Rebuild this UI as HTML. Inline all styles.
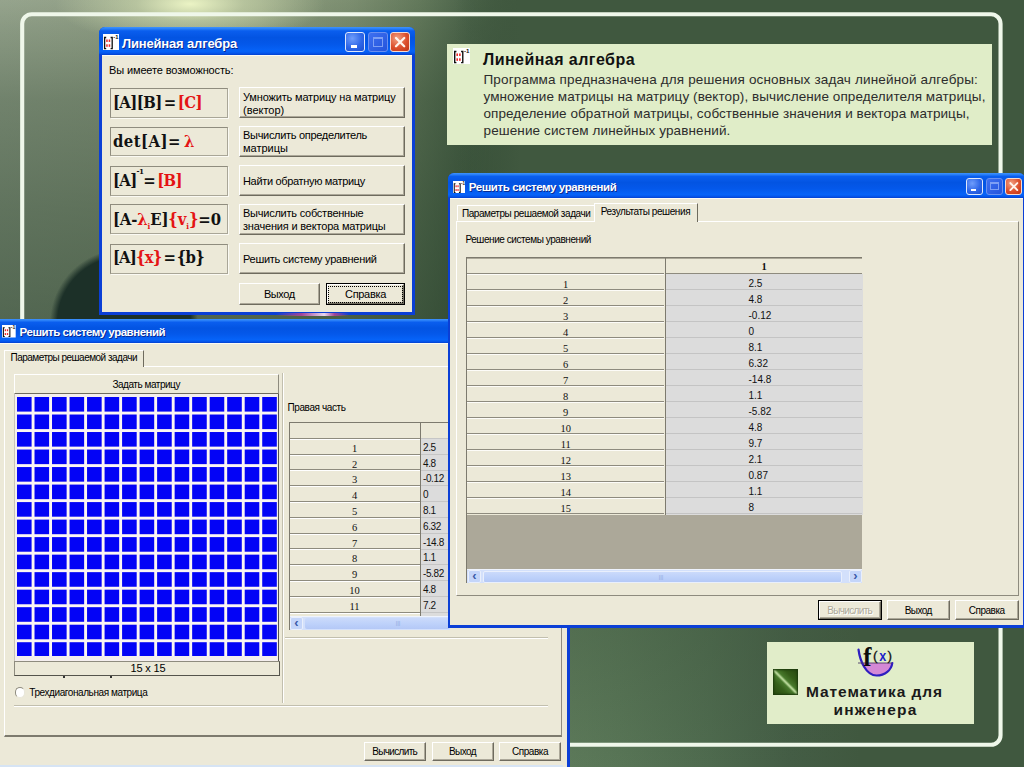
<!DOCTYPE html>
<html lang="ru">
<head>
<meta charset="utf-8">
<title>Линейная алгебра</title>
<style>
html,body{margin:0;padding:0;}
body{width:1024px;height:767px;overflow:hidden;position:relative;background:#41593f;font-family:"Liberation Sans","DejaVu Sans",sans-serif;font-size:11px;color:#000;}
#bg{position:absolute;left:0;top:0;width:1024px;height:767px;
 background:
  radial-gradient(ellipse 135px 42px at 190px 4px, rgba(240,248,200,.95) 0%, rgba(215,226,180,.55) 40%, rgba(170,185,145,0) 100%),
  radial-gradient(circle 74px at 124px 323px, #1c3028 0%, #1c3028 90%, rgba(28,48,40,0) 100%),
  linear-gradient(180deg,rgba(30,55,35,.02) 0px,rgba(30,55,35,.12) 30px,rgba(30,55,35,.32) 100px,rgba(30,55,35,.46) 210px,rgba(30,55,35,.57) 320px,rgba(30,55,35,.57) 767px),
  linear-gradient(90deg,#98a68f 0px,#95a38a 100px,#91a082 260px,#7e9072 350px,#647a5c 420px,#4c644a 470px,#40583f 520px,#40583f 1024px);}
#bgr{position:absolute;left:455px;top:0;width:569px;height:767px;background:linear-gradient(90deg,rgba(64,88,63,0) 0px,#40583f 65px,#40583f);}
#bgb{position:absolute;left:560px;top:620px;width:464px;height:147px;background:linear-gradient(180deg,rgba(64,88,63,.35) 0%,rgba(64,88,63,0) 100%),linear-gradient(90deg,#5d7a5a 0px,#587556 60px,#4e6a4e 150px,#445d45 230px,#40583f 300px);}
#frame{position:absolute;left:0;top:0;}
</style>
</head>
<body>
<div id="bg"></div>
<div id="bgr"></div>
<div id="bgb"></div>
<svg id="frame" width="1024" height="767" viewBox="0 0 1024 767"><rect x="22.200" y="14.200" width="978.350" height="730.600" rx="9.500" ry="9.500" fill="none" stroke="#eff7ea" stroke-width="4.100"/></svg>
<div style="position:absolute;left:447px;top:43.5px;width:544.5px;height:101px;background:#e0edc8;"></div>
<svg width="17" height="16" viewBox="0 0 16 15.5" preserveAspectRatio="none" style="position:absolute;left:453px;top:48px"><rect width="16" height="15.500" fill="#fff"/><path d="M3.200 3.400H1.600V14.200H3.200M7.600 3.400H9.200V14.200H7.600" stroke="#111" stroke-width="1.300" fill="none"/><rect x="3.200" y="5.300" width="1.500" height="2.400" fill="#f02828"/><rect x="5.700" y="5.300" width="1.500" height="2.400" fill="#f02828"/><rect x="3.200" y="10" width="1.500" height="2.400" fill="#f02828"/><rect x="5.700" y="10" width="1.500" height="2.400" fill="#f02828"/><text x="10.300" y="5" font-family="Liberation Sans,sans-serif" font-weight="bold" font-size="5.800" fill="#111">-1</text></svg>
<div style="position:absolute;left:483.00px;top:48.50px;line-height:21px;font-family:'Liberation Sans','DejaVu Sans',sans-serif;font-size:16px;font-weight:bold;color:#111;white-space:nowrap;letter-spacing:0.451px;">Линейная алгебра</div>
<div style="position:absolute;left:483.50px;top:71.30px;line-height:18px;font-family:'Liberation Sans','DejaVu Sans',sans-serif;font-size:13.5px;font-weight:normal;color:#2c2c2c;white-space:nowrap;letter-spacing:0.163px;">Программа предназначена для решения основных задач линейной алгебры:</div>
<div style="position:absolute;left:483.50px;top:88.20px;line-height:18px;font-family:'Liberation Sans','DejaVu Sans',sans-serif;font-size:13.5px;font-weight:normal;color:#2c2c2c;white-space:nowrap;letter-spacing:0.086px;">умножение матрицы на матрицу (вектор), вычисление определителя матрицы,</div>
<div style="position:absolute;left:483.50px;top:105.10px;line-height:18px;font-family:'Liberation Sans','DejaVu Sans',sans-serif;font-size:13.5px;font-weight:normal;color:#2c2c2c;white-space:nowrap;letter-spacing:0.072px;">определение обратной матрицы, собственные значения и вектора матрицы,</div>
<div style="position:absolute;left:483.50px;top:122.00px;line-height:18px;font-family:'Liberation Sans','DejaVu Sans',sans-serif;font-size:13.5px;font-weight:normal;color:#2c2c2c;white-space:nowrap;letter-spacing:0.122px;">решение систем линейных уравнений.</div>
<div style="position:absolute;left:767px;top:642px;width:206.5px;height:82px;background:#e1edc9;"></div>
<div style="position:absolute;left:773px;top:669px;width:25px;height:25.5px;background:linear-gradient(45deg,#28480f 0%,#36601a 30%,#497a2c 44%,#c4e2a4 50%,#497a2c 56%,#345c18 72%,#26460e 100%);box-shadow:inset 0 0 2px 1px #1c3a0c;"></div>
<div style="position:absolute;left:806.00px;top:682.00px;line-height:20px;font-family:'Liberation Sans','DejaVu Sans',sans-serif;font-size:15.5px;font-weight:bold;color:#1a1a1a;white-space:nowrap;letter-spacing:0.917px;">Математика для</div>
<div style="position:absolute;left:833.50px;top:700.30px;line-height:20px;font-family:'Liberation Sans','DejaVu Sans',sans-serif;font-size:15.5px;font-weight:bold;color:#1a1a1a;white-space:nowrap;letter-spacing:1.203px;">инженера</div>
<svg width="44" height="36" viewBox="853 643 44 36" style="position:absolute;left:853px;top:643px">
<path d="M861.500 663 H892.300 C891.500 670 885 675.500 876.500 675.500 C869 675.500 864 670 861.500 663Z" fill="#d488d6"/>
<path d="M858.500 649.500 C860 661 866 675.500 876.500 675.500 C885 675.500 891.500 670 892.300 663" fill="none" stroke="#2e1ec0" stroke-width="2.200" stroke-linecap="round"/>
<path d="M858 663 H892" stroke="#4a3a6a" stroke-width="0.900"/>
<text x="863.300" y="665.600" font-family="Liberation Serif,serif" font-weight="bold" font-size="27" textLength="8.200" lengthAdjust="spacingAndGlyphs" fill="#0c0c0c">f</text>
<text x="873" y="660.400" font-family="Liberation Sans,sans-serif" font-size="13.500" fill="#111" stroke="#111" stroke-width="0.300">(</text>
<text x="887.600" y="660.400" font-family="Liberation Sans,sans-serif" font-size="13.500" fill="#111" stroke="#111" stroke-width="0.300">)</text>
<text x="879.200" y="660.900" font-family="Liberation Sans,sans-serif" font-weight="bold" font-size="15.500" textLength="7" lengthAdjust="spacingAndGlyphs" fill="#1c1cc8">x</text>
</svg>
<div style="position:absolute;left:98.5px;top:27px;width:316.5px;height:288px;background:#0b3fd6;border-radius:6px 6px 0 0;"></div>
<div style="position:absolute;left:98.5px;top:27px;width:316.5px;height:28px;background:linear-gradient(180deg,#3f93fc 0%,#2a80f8 6%,#0a5eee 14%,#0354e2 38%,#0458ea 62%,#0663f8 86%,#0558ee 93%,#0340cf 100%);border-radius:6px 6px 0 0;"></div>
<div style="position:absolute;left:101.5px;top:55px;width:310.5px;height:257px;background:#ece9d8;box-shadow:inset 0 1px 0 #fbfaf4;"></div>
<div style="position:absolute;left:276px;top:312.5px;width:73px;height:3px;background:linear-gradient(90deg,rgba(176,70,150,0) 0%,rgba(176,70,150,.9) 35%,#e6d6ee 66%,rgba(176,70,150,.9) 80%,rgba(176,70,150,0) 100%);"></div>
<svg width="16" height="16" viewBox="0 0 16 15.5" preserveAspectRatio="none" style="position:absolute;left:103px;top:34px"><rect width="16" height="15.500" fill="#fff"/><path d="M3.200 3.400H1.600V14.200H3.200M7.600 3.400H9.200V14.200H7.600" stroke="#111" stroke-width="1.300" fill="none"/><rect x="3.200" y="5.300" width="1.500" height="2.400" fill="#f02828"/><rect x="5.700" y="5.300" width="1.500" height="2.400" fill="#f02828"/><rect x="3.200" y="10" width="1.500" height="2.400" fill="#f02828"/><rect x="5.700" y="10" width="1.500" height="2.400" fill="#f02828"/><text x="10.300" y="5" font-family="Liberation Sans,sans-serif" font-weight="bold" font-size="5.800" fill="#111">-1</text></svg>
<div style="position:absolute;left:122.00px;top:35.00px;line-height:17px;font-family:'Liberation Sans','DejaVu Sans',sans-serif;font-size:13px;font-weight:bold;color:#fff;white-space:nowrap;letter-spacing:-0.165px;text-shadow:1px 1px 0 #0a2a90;">Линейная алгебра</div>
<div style="position:absolute;left:345px;top:32px;width:20px;height:20px;box-sizing:border-box;border:1px solid #dfe8fb;border-radius:3px;background:radial-gradient(circle at 35% 30%,#6f9dfb 0%,#2f67e8 55%,#1c4fd0 100%);"><div style="position:absolute;left:4.8px;top:12.0px;width:6.4px;height:3.0px;background:#fff"></div></div>
<div style="position:absolute;left:368px;top:32px;width:20px;height:20px;box-sizing:border-box;border:1px solid #6a90f0;border-radius:3px;background:linear-gradient(135deg,#3e70f0,#2454dc);"><div style="position:absolute;left:4.4px;top:4.0px;width:10.0px;height:9.6px;border:1px solid #7d9ff4;border-top-width:2.5px;box-sizing:border-box"></div></div>
<div style="position:absolute;left:390px;top:32px;width:20px;height:20px;box-sizing:border-box;border:1px solid #f6dcd2;border-radius:3px;background:radial-gradient(circle at 35% 30%,#f2a284 0%,#dc4f2c 55%,#bf3416 100%);"><svg width="20" height="20" viewBox="0 0 20 20" style="position:absolute;left:-1px;top:-1px"><path d="M6 6L14.200 14.200M14.200 6L6 14.200" stroke="#fff4ec" stroke-width="2.300" stroke-linecap="round"/></svg></div>
<div style="position:absolute;left:109.00px;top:63.40px;line-height:14px;font-family:'Liberation Sans','DejaVu Sans',sans-serif;font-size:11px;font-weight:normal;color:#000;white-space:nowrap;letter-spacing:-0.125px;">Вы имеете возможность:</div>
<div style="position:absolute;left:110px;top:88px;width:117.5px;height:29.5px;box-sizing:border-box;border:1px solid;border-color:#8f8c7e #a9a697 #a9a697 #8f8c7e;box-shadow:1px 1px 0 #fbfaf3;"></div>
<div style="position:absolute;left:110px;top:126.5px;width:117.5px;height:29.5px;box-sizing:border-box;border:1px solid;border-color:#8f8c7e #a9a697 #a9a697 #8f8c7e;box-shadow:1px 1px 0 #fbfaf3;"></div>
<div style="position:absolute;left:110px;top:166px;width:117.5px;height:29.5px;box-sizing:border-box;border:1px solid;border-color:#8f8c7e #a9a697 #a9a697 #8f8c7e;box-shadow:1px 1px 0 #fbfaf3;"></div>
<div style="position:absolute;left:110px;top:204px;width:117.5px;height:29.5px;box-sizing:border-box;border:1px solid;border-color:#8f8c7e #a9a697 #a9a697 #8f8c7e;box-shadow:1px 1px 0 #fbfaf3;"></div>
<div style="position:absolute;left:110px;top:244px;width:117.5px;height:29.5px;box-sizing:border-box;border:1px solid;border-color:#8f8c7e #a9a697 #a9a697 #8f8c7e;box-shadow:1px 1px 0 #fbfaf3;"></div>
<div style="position:absolute;left:239px;top:87px;width:166px;height:31px;box-sizing:border-box;background:#ece9d8;border:1px solid;border-color:#fff #6e6b5e #6e6b5e #fff;box-shadow:inset -1px -1px 0 #aca899;"></div>
<div style="position:absolute;left:239px;top:125.5px;width:166px;height:31px;box-sizing:border-box;background:#ece9d8;border:1px solid;border-color:#fff #6e6b5e #6e6b5e #fff;box-shadow:inset -1px -1px 0 #aca899;"></div>
<div style="position:absolute;left:239px;top:165.3px;width:166px;height:31px;box-sizing:border-box;background:#ece9d8;border:1px solid;border-color:#fff #6e6b5e #6e6b5e #fff;box-shadow:inset -1px -1px 0 #aca899;"></div>
<div style="position:absolute;left:239px;top:203.5px;width:166px;height:31px;box-sizing:border-box;background:#ece9d8;border:1px solid;border-color:#fff #6e6b5e #6e6b5e #fff;box-shadow:inset -1px -1px 0 #aca899;"></div>
<div style="position:absolute;left:239px;top:242.7px;width:166px;height:31px;box-sizing:border-box;background:#ece9d8;border:1px solid;border-color:#fff #6e6b5e #6e6b5e #fff;box-shadow:inset -1px -1px 0 #aca899;"></div>
<div style="position:absolute;left:239px;top:282.5px;width:80.5px;height:22.5px;box-sizing:border-box;background:#ece9d8;border:1px solid;border-color:#fff #6e6b5e #6e6b5e #fff;box-shadow:inset -1px -1px 0 #aca899;"></div>
<div style="position:absolute;left:325.5px;top:282.5px;width:79.5px;height:22.5px;background:#000;"></div>
<div style="position:absolute;left:326.5px;top:283.5px;width:77.5px;height:20.5px;box-sizing:border-box;background:#ece9d8;border:1px solid;border-color:#fff #6e6b5e #6e6b5e #fff;box-shadow:inset -1px -1px 0 #aca899;"></div>
<div style="position:absolute;left:328px;top:285.5px;width:74.5px;height:17px;box-sizing:border-box;border:1px dotted #000;"></div>
<div style="position:absolute;left:243.00px;top:89.80px;line-height:14px;font-family:'Liberation Sans','DejaVu Sans',sans-serif;font-size:11px;font-weight:normal;color:#000;white-space:nowrap;letter-spacing:-0.161px;">Умножить матрицу на матрицу</div>
<div style="position:absolute;left:243.00px;top:102.60px;line-height:14px;font-family:'Liberation Sans','DejaVu Sans',sans-serif;font-size:11px;font-weight:normal;color:#000;white-space:nowrap;">(вектор)</div>
<div style="position:absolute;left:243.00px;top:128.00px;line-height:14px;font-family:'Liberation Sans','DejaVu Sans',sans-serif;font-size:11px;font-weight:normal;color:#000;white-space:nowrap;letter-spacing:-0.301px;">Вычислить определитель</div>
<div style="position:absolute;left:243.00px;top:141.30px;line-height:14px;font-family:'Liberation Sans','DejaVu Sans',sans-serif;font-size:11px;font-weight:normal;color:#000;white-space:nowrap;">матрицы</div>
<div style="position:absolute;left:243.00px;top:173.50px;line-height:14px;font-family:'Liberation Sans','DejaVu Sans',sans-serif;font-size:11px;font-weight:normal;color:#000;white-space:nowrap;letter-spacing:-0.333px;">Найти обратную матрицу</div>
<div style="position:absolute;left:243.00px;top:206.40px;line-height:14px;font-family:'Liberation Sans','DejaVu Sans',sans-serif;font-size:11px;font-weight:normal;color:#000;white-space:nowrap;letter-spacing:-0.237px;">Вычислить собственные</div>
<div style="position:absolute;left:243.00px;top:219.30px;line-height:14px;font-family:'Liberation Sans','DejaVu Sans',sans-serif;font-size:11px;font-weight:normal;color:#000;white-space:nowrap;letter-spacing:-0.182px;">значения и вектора матрицы</div>
<div style="position:absolute;left:243.00px;top:251.50px;line-height:14px;font-family:'Liberation Sans','DejaVu Sans',sans-serif;font-size:11px;font-weight:normal;color:#000;white-space:nowrap;letter-spacing:-0.271px;">Решить систему уравнений</div>
<div style="position:absolute;left:264.00px;top:286.90px;line-height:14px;font-family:'Liberation Sans','DejaVu Sans',sans-serif;font-size:11px;font-weight:normal;color:#000;white-space:nowrap;letter-spacing:-0.464px;">Выход</div>
<div style="position:absolute;left:345.00px;top:286.90px;line-height:14px;font-family:'Liberation Sans','DejaVu Sans',sans-serif;font-size:11px;font-weight:normal;color:#000;white-space:nowrap;letter-spacing:-0.308px;">Справка</div>
<div style="position:absolute;left:112.90px;top:92.00px;line-height:21px;font-family:'DejaVu Serif Condensed','DejaVu Serif','Liberation Serif',serif;font-size:16.5px;font-weight:bold;color:#111;white-space:nowrap;letter-spacing:-0.568px;word-spacing:-2.500px;">[A][B] = <span style="color:#e41414">[C]</span></div>
<div style="position:absolute;left:112.90px;top:130.50px;line-height:21px;font-family:'DejaVu Serif Condensed','DejaVu Serif','Liberation Serif',serif;font-size:16.5px;font-weight:bold;color:#111;white-space:nowrap;letter-spacing:0.469px;word-spacing:-2.500px;">det[A]= <span style="color:#e41414">λ</span></div>
<div style="position:absolute;left:112.90px;top:170.00px;line-height:21px;font-family:'DejaVu Serif Condensed','DejaVu Serif','Liberation Serif',serif;font-size:16.5px;font-weight:bold;color:#111;white-space:nowrap;letter-spacing:-0.630px;word-spacing:-2.500px;">[A]<sup style="font-size:8px;position:relative;top:-3px;vertical-align:top;line-height:8px">-1</sup>= <span style="color:#e41414">[B]</span></div>
<div style="position:absolute;left:112.90px;top:208.50px;line-height:21px;font-family:'DejaVu Serif Condensed','DejaVu Serif','Liberation Serif',serif;font-size:16.5px;font-weight:bold;color:#111;white-space:nowrap;letter-spacing:-0.114px;word-spacing:-2.500px;">[A-<span style="color:#e41414">λ<sub style="font-size:8px;line-height:6px">i</sub></span>E]<span style="color:#e41414">{v<sub style="font-size:8px;line-height:6px">i</sub>}</span>=0</div>
<div style="position:absolute;left:112.90px;top:247.20px;line-height:21px;font-family:'DejaVu Serif Condensed','DejaVu Serif','Liberation Serif',serif;font-size:16.5px;font-weight:bold;color:#111;white-space:nowrap;letter-spacing:-0.815px;word-spacing:-2.500px;">[A]<span style="color:#e41414">{x}</span> = {b}</div>
<div style="position:absolute;left:-3px;top:319px;width:572.5px;height:461px;background:#0b3fd6;border-radius:0px 6px 0 0;"></div>
<div style="position:absolute;left:-3px;top:319px;width:572.5px;height:24px;background:linear-gradient(180deg,#3f93fc 0%,#2a80f8 6%,#0a5eee 14%,#0354e2 38%,#0458ea 62%,#0663f8 86%,#0558ee 93%,#0340cf 100%);border-radius:0px 6px 0 0;"></div>
<div style="position:absolute;left:-3px;top:343px;width:569.5px;height:434px;background:#ece9d8;box-shadow:inset 0 1px 0 #fbfaf4;"></div>
<svg width="13.7" height="12.5" viewBox="0 0 16 15.5" preserveAspectRatio="none" style="position:absolute;left:2.2px;top:325px"><rect width="16" height="15.500" fill="#fff"/><path d="M3.200 3.400H1.600V14.200H3.200M7.600 3.400H9.200V14.200H7.600" stroke="#111" stroke-width="1.300" fill="none"/><rect x="3.200" y="5.300" width="1.500" height="2.400" fill="#f02828"/><rect x="5.700" y="5.300" width="1.500" height="2.400" fill="#f02828"/><rect x="3.200" y="10" width="1.500" height="2.400" fill="#f02828"/><rect x="5.700" y="10" width="1.500" height="2.400" fill="#f02828"/><text x="10.300" y="5" font-family="Liberation Sans,sans-serif" font-weight="bold" font-size="5.800" fill="#111">-1</text></svg>
<div style="position:absolute;left:19.60px;top:324.80px;line-height:15px;font-family:'Liberation Sans','DejaVu Sans',sans-serif;font-size:11.5px;font-weight:bold;color:#fff;white-space:nowrap;letter-spacing:-0.483px;text-shadow:1px 1px 0 #0a2a90;">Решить систему уравнений</div>
<div style="position:absolute;left:4px;top:365.5px;width:557.5px;height:371.8px;box-sizing:border-box;border:1px solid;border-color:#fff #8e8b7e #7d7a6e #fff;border-bottom-width:2px;border-right-width:1.500px;"></div>
<div style="position:absolute;left:4px;top:349.5px;width:140px;height:17px;box-sizing:border-box;background:#ece9d8;border:1px solid;border-color:#fff #6e6b5e transparent #fff;border-bottom:0;"></div>
<div style="position:absolute;left:10.50px;top:351.10px;line-height:13px;font-family:'Liberation Sans','DejaVu Sans',sans-serif;font-size:10px;font-weight:normal;color:#000;white-space:nowrap;letter-spacing:-0.511px;">Параметры решаемой задачи</div>
<div style="position:absolute;left:14px;top:374px;width:264.5px;height:20px;box-sizing:border-box;border:1px solid;border-color:#fff #8e8b7e #6e6b5e #fff;border-bottom-width:1.500px;"></div>
<div style="position:absolute;left:112.45px;top:377.80px;line-height:13px;font-family:'Liberation Sans','DejaVu Sans',sans-serif;font-size:10px;font-weight:normal;color:#000;white-space:nowrap;letter-spacing:-0.467px;">Задать матрицу</div>
<div style="position:absolute;left:14px;top:394px;width:265px;height:266.5px;background:#f4eeee;box-sizing:border-box;border-right:1.500px solid #55544c;border-left:1px solid #c8c4b8;"></div>
<div style="position:absolute;left:17px;top:396.5px;width:259.8px;height:259.8px;background-color:#0303f6;background-image:linear-gradient(90deg,transparent 14.719999999999999px,#fbf5f3 14.719999999999999px),linear-gradient(180deg,transparent 14.719999999999999px,#fbf5f3 14.719999999999999px);background-size:17.52px 17.52px;"></div>
<div style="position:absolute;left:14px;top:660.5px;width:266px;height:15.5px;box-sizing:border-box;border:1px solid;border-color:#8e8b7e #55544c #55544c #8e8b7e;"></div>
<div style="position:absolute;left:130.50px;top:661.00px;line-height:14px;font-family:'Liberation Sans','DejaVu Sans',sans-serif;font-size:11px;font-weight:normal;color:#000;white-space:nowrap;letter-spacing:-0.156px;">15 x 15</div>
<div style="position:absolute;left:62.5px;top:676px;width:2px;height:2px;background:#333;"></div>
<div style="position:absolute;left:110px;top:676px;width:2px;height:2px;background:#333;"></div>
<div style="position:absolute;left:14.5px;top:687px;width:10.5px;height:10.5px;box-sizing:border-box;border-radius:50%;background:#fff;border:1px solid;border-color:#8e8b7e #e8e6da #e8e6da #8e8b7e;"></div>
<div style="position:absolute;left:29.30px;top:685.80px;line-height:13px;font-family:'Liberation Sans','DejaVu Sans',sans-serif;font-size:10px;font-weight:normal;color:#000;white-space:nowrap;letter-spacing:-0.419px;">Трехдиагональная матрица</div>
<div style="position:absolute;left:282px;top:373px;width:1px;height:330px;background:#c2bfae;"></div>
<div style="position:absolute;left:283px;top:373px;width:1px;height:330px;background:#fff;"></div>
<div style="position:absolute;left:14px;top:704.5px;width:534px;height:1px;background:#c2bfae;"></div>
<div style="position:absolute;left:14px;top:705.5px;width:534px;height:1px;background:#fff;"></div>
<div style="position:absolute;left:285px;top:637px;width:263px;height:1px;background:#c2bfae;"></div>
<div style="position:absolute;left:285px;top:638px;width:263px;height:1px;background:#fff;"></div>
<div style="position:absolute;left:287.50px;top:400.50px;line-height:13px;font-family:'Liberation Sans','DejaVu Sans',sans-serif;font-size:10px;font-weight:normal;color:#000;white-space:nowrap;letter-spacing:-0.402px;">Правая часть</div>
<div style="position:absolute;left:288.5px;top:422px;width:161.5px;height:208px;background:#ece9d8;box-sizing:border-box;border-top:1.500px solid #7d7a6e;border-left:1.500px solid #7d7a6e;"></div>
<div style="position:absolute;left:421px;top:439px;width:29px;height:177px;background:#dcdcdc;"></div>
<div style="position:absolute;left:420px;top:422px;width:1.2px;height:194px;background:#7d7a6e;"></div>
<div style="position:absolute;left:289.5px;top:437.8px;width:130.5px;height:1px;background:#8e8b7e;"></div>
<div style="position:absolute;left:289.5px;top:438.8px;width:130.5px;height:1px;background:#fff;"></div>
<div style="position:absolute;left:421px;top:438px;width:29px;height:1px;background:#c6c6c6;"></div>
<div style="position:absolute;left:289.5px;top:453.6px;width:130.5px;height:1px;background:#8e8b7e;"></div>
<div style="position:absolute;left:289.5px;top:454.6px;width:130.5px;height:1px;background:#fff;"></div>
<div style="position:absolute;left:421px;top:453.8px;width:29px;height:1px;background:#c6c6c6;"></div>
<div style="position:absolute;left:289.5px;top:469.4px;width:130.5px;height:1px;background:#8e8b7e;"></div>
<div style="position:absolute;left:289.5px;top:470.4px;width:130.5px;height:1px;background:#fff;"></div>
<div style="position:absolute;left:421px;top:469.6px;width:29px;height:1px;background:#c6c6c6;"></div>
<div style="position:absolute;left:289.5px;top:485.2px;width:130.5px;height:1px;background:#8e8b7e;"></div>
<div style="position:absolute;left:289.5px;top:486.2px;width:130.5px;height:1px;background:#fff;"></div>
<div style="position:absolute;left:421px;top:485.4px;width:29px;height:1px;background:#c6c6c6;"></div>
<div style="position:absolute;left:289.5px;top:501px;width:130.5px;height:1px;background:#8e8b7e;"></div>
<div style="position:absolute;left:289.5px;top:502px;width:130.5px;height:1px;background:#fff;"></div>
<div style="position:absolute;left:421px;top:501.2px;width:29px;height:1px;background:#c6c6c6;"></div>
<div style="position:absolute;left:289.5px;top:516.8px;width:130.5px;height:1px;background:#8e8b7e;"></div>
<div style="position:absolute;left:289.5px;top:517.8px;width:130.5px;height:1px;background:#fff;"></div>
<div style="position:absolute;left:421px;top:517px;width:29px;height:1px;background:#c6c6c6;"></div>
<div style="position:absolute;left:289.5px;top:532.6px;width:130.5px;height:1px;background:#8e8b7e;"></div>
<div style="position:absolute;left:289.5px;top:533.6px;width:130.5px;height:1px;background:#fff;"></div>
<div style="position:absolute;left:421px;top:532.8px;width:29px;height:1px;background:#c6c6c6;"></div>
<div style="position:absolute;left:289.5px;top:548.4px;width:130.5px;height:1px;background:#8e8b7e;"></div>
<div style="position:absolute;left:289.5px;top:549.4px;width:130.5px;height:1px;background:#fff;"></div>
<div style="position:absolute;left:421px;top:548.6px;width:29px;height:1px;background:#c6c6c6;"></div>
<div style="position:absolute;left:289.5px;top:564.2px;width:130.5px;height:1px;background:#8e8b7e;"></div>
<div style="position:absolute;left:289.5px;top:565.2px;width:130.5px;height:1px;background:#fff;"></div>
<div style="position:absolute;left:421px;top:564.4px;width:29px;height:1px;background:#c6c6c6;"></div>
<div style="position:absolute;left:289.5px;top:580px;width:130.5px;height:1px;background:#8e8b7e;"></div>
<div style="position:absolute;left:289.5px;top:581px;width:130.5px;height:1px;background:#fff;"></div>
<div style="position:absolute;left:421px;top:580.2px;width:29px;height:1px;background:#c6c6c6;"></div>
<div style="position:absolute;left:289.5px;top:595.8px;width:130.5px;height:1px;background:#8e8b7e;"></div>
<div style="position:absolute;left:289.5px;top:596.8px;width:130.5px;height:1px;background:#fff;"></div>
<div style="position:absolute;left:421px;top:596px;width:29px;height:1px;background:#c6c6c6;"></div>
<div style="position:absolute;left:289.5px;top:611.6px;width:130.5px;height:1px;background:#8e8b7e;"></div>
<div style="position:absolute;left:289.5px;top:612.6px;width:130.5px;height:1px;background:#fff;"></div>
<div style="position:absolute;left:421px;top:611.8px;width:29px;height:1px;background:#c6c6c6;"></div>
<div style="position:absolute;left:351.88px;top:441.70px;line-height:14px;font-family:'Liberation Serif','DejaVu Serif',serif;font-size:10.5px;font-weight:normal;color:#111;white-space:nowrap;">1</div>
<div style="position:absolute;left:423.00px;top:440.70px;line-height:13px;font-family:'Liberation Sans','DejaVu Sans',sans-serif;font-size:10px;font-weight:normal;color:#111;white-space:nowrap;letter-spacing:-0.400px;">2.5</div>
<div style="position:absolute;left:351.88px;top:457.50px;line-height:14px;font-family:'Liberation Serif','DejaVu Serif',serif;font-size:10.5px;font-weight:normal;color:#111;white-space:nowrap;">2</div>
<div style="position:absolute;left:423.00px;top:456.50px;line-height:13px;font-family:'Liberation Sans','DejaVu Sans',sans-serif;font-size:10px;font-weight:normal;color:#111;white-space:nowrap;letter-spacing:-0.400px;">4.8</div>
<div style="position:absolute;left:351.88px;top:473.30px;line-height:14px;font-family:'Liberation Serif','DejaVu Serif',serif;font-size:10.5px;font-weight:normal;color:#111;white-space:nowrap;">3</div>
<div style="position:absolute;left:423.00px;top:472.30px;line-height:13px;font-family:'Liberation Sans','DejaVu Sans',sans-serif;font-size:10px;font-weight:normal;color:#111;white-space:nowrap;letter-spacing:-0.400px;">-0.12</div>
<div style="position:absolute;left:351.88px;top:489.10px;line-height:14px;font-family:'Liberation Serif','DejaVu Serif',serif;font-size:10.5px;font-weight:normal;color:#111;white-space:nowrap;">4</div>
<div style="position:absolute;left:423.00px;top:488.10px;line-height:13px;font-family:'Liberation Sans','DejaVu Sans',sans-serif;font-size:10px;font-weight:normal;color:#111;white-space:nowrap;letter-spacing:-0.400px;">0</div>
<div style="position:absolute;left:351.88px;top:504.90px;line-height:14px;font-family:'Liberation Serif','DejaVu Serif',serif;font-size:10.5px;font-weight:normal;color:#111;white-space:nowrap;">5</div>
<div style="position:absolute;left:423.00px;top:503.90px;line-height:13px;font-family:'Liberation Sans','DejaVu Sans',sans-serif;font-size:10px;font-weight:normal;color:#111;white-space:nowrap;letter-spacing:-0.400px;">8.1</div>
<div style="position:absolute;left:351.88px;top:520.70px;line-height:14px;font-family:'Liberation Serif','DejaVu Serif',serif;font-size:10.5px;font-weight:normal;color:#111;white-space:nowrap;">6</div>
<div style="position:absolute;left:423.00px;top:519.70px;line-height:13px;font-family:'Liberation Sans','DejaVu Sans',sans-serif;font-size:10px;font-weight:normal;color:#111;white-space:nowrap;letter-spacing:-0.400px;">6.32</div>
<div style="position:absolute;left:351.88px;top:536.50px;line-height:14px;font-family:'Liberation Serif','DejaVu Serif',serif;font-size:10.5px;font-weight:normal;color:#111;white-space:nowrap;">7</div>
<div style="position:absolute;left:423.00px;top:535.50px;line-height:13px;font-family:'Liberation Sans','DejaVu Sans',sans-serif;font-size:10px;font-weight:normal;color:#111;white-space:nowrap;letter-spacing:-0.400px;">-14.8</div>
<div style="position:absolute;left:351.88px;top:552.30px;line-height:14px;font-family:'Liberation Serif','DejaVu Serif',serif;font-size:10.5px;font-weight:normal;color:#111;white-space:nowrap;">8</div>
<div style="position:absolute;left:423.00px;top:551.30px;line-height:13px;font-family:'Liberation Sans','DejaVu Sans',sans-serif;font-size:10px;font-weight:normal;color:#111;white-space:nowrap;letter-spacing:-0.400px;">1.1</div>
<div style="position:absolute;left:351.88px;top:568.10px;line-height:14px;font-family:'Liberation Serif','DejaVu Serif',serif;font-size:10.5px;font-weight:normal;color:#111;white-space:nowrap;">9</div>
<div style="position:absolute;left:423.00px;top:567.10px;line-height:13px;font-family:'Liberation Sans','DejaVu Sans',sans-serif;font-size:10px;font-weight:normal;color:#111;white-space:nowrap;letter-spacing:-0.400px;">-5.82</div>
<div style="position:absolute;left:349.25px;top:583.90px;line-height:14px;font-family:'Liberation Serif','DejaVu Serif',serif;font-size:10.5px;font-weight:normal;color:#111;white-space:nowrap;">10</div>
<div style="position:absolute;left:423.00px;top:582.90px;line-height:13px;font-family:'Liberation Sans','DejaVu Sans',sans-serif;font-size:10px;font-weight:normal;color:#111;white-space:nowrap;letter-spacing:-0.400px;">4.8</div>
<div style="position:absolute;left:349.44px;top:599.70px;line-height:14px;font-family:'Liberation Serif','DejaVu Serif',serif;font-size:10.5px;font-weight:normal;color:#111;white-space:nowrap;">11</div>
<div style="position:absolute;left:423.00px;top:598.70px;line-height:13px;font-family:'Liberation Sans','DejaVu Sans',sans-serif;font-size:10px;font-weight:normal;color:#111;white-space:nowrap;letter-spacing:-0.400px;">7.2</div>
<div style="position:absolute;left:289.5px;top:616px;width:160.5px;height:14px;background:#d3e0fb;border-top:1px solid #eef3fd;box-sizing:border-box;"></div>
<div style="position:absolute;left:290px;top:617px;width:13px;height:12.5px;background:#c4d5f9;border:1px solid #e9effc;box-sizing:border-box;border-radius:2px;"></div>
<div style="position:absolute;left:294.33px;top:617.00px;line-height:12px;font-family:'Liberation Sans','DejaVu Sans',sans-serif;font-size:13px;font-weight:normal;color:#3a5aa8;white-space:nowrap;"><b>&#8249;</b></div>
<div style="position:absolute;left:305px;top:617.5px;width:145px;height:11.5px;background:linear-gradient(180deg,#cbdafb,#bcd0fa 60%,#b4c8f6);border-radius:2px;"></div>
<div style="position:absolute;left:395.66px;top:619.00px;line-height:8px;font-family:'Liberation Sans','DejaVu Sans',sans-serif;font-size:6px;font-weight:normal;color:#8fa8e0;white-space:nowrap;">|||</div>
<div style="position:absolute;left:363.5px;top:742px;width:62.5px;height:18.5px;box-sizing:border-box;background:#ece9d8;border:1px solid;border-color:#fff #6e6b5e #6e6b5e #fff;box-shadow:inset -1px -1px 0 #aca899;"></div>
<div style="position:absolute;left:431.5px;top:742px;width:62px;height:18.5px;box-sizing:border-box;background:#ece9d8;border:1px solid;border-color:#fff #6e6b5e #6e6b5e #fff;box-shadow:inset -1px -1px 0 #aca899;"></div>
<div style="position:absolute;left:499px;top:742px;width:62px;height:18.5px;box-sizing:border-box;background:#ece9d8;border:1px solid;border-color:#fff #6e6b5e #6e6b5e #fff;box-shadow:inset -1px -1px 0 #aca899;"></div>
<div style="position:absolute;left:372.20px;top:744.80px;line-height:13px;font-family:'Liberation Sans','DejaVu Sans',sans-serif;font-size:10px;font-weight:normal;color:#000;white-space:nowrap;letter-spacing:-0.653px;">Вычислить</div>
<div style="position:absolute;left:449.00px;top:744.80px;line-height:13px;font-family:'Liberation Sans','DejaVu Sans',sans-serif;font-size:10px;font-weight:normal;color:#000;white-space:nowrap;letter-spacing:-0.584px;">Выход</div>
<div style="position:absolute;left:512.00px;top:744.80px;line-height:13px;font-family:'Liberation Sans','DejaVu Sans',sans-serif;font-size:10px;font-weight:normal;color:#000;white-space:nowrap;letter-spacing:-0.462px;">Справка</div>
<div style="position:absolute;left:0px;top:765px;width:563px;height:2px;background:#d6e4f4;"></div>
<div style="position:absolute;left:447.5px;top:172.5px;width:577.5px;height:455.3px;background:#0b3fd6;border-radius:6px 6px 0 0;"></div>
<div style="position:absolute;left:447.5px;top:172.5px;width:577.5px;height:25px;background:linear-gradient(180deg,#3f93fc 0%,#2a80f8 6%,#0a5eee 14%,#0354e2 38%,#0458ea 62%,#0663f8 86%,#0558ee 93%,#0340cf 100%);border-radius:6px 6px 0 0;"></div>
<div style="position:absolute;left:450px;top:197.5px;width:572.5px;height:427.8px;background:#ece9d8;box-shadow:inset 0 1px 0 #fbfaf4;"></div>
<svg width="12.5" height="12.5" viewBox="0 0 16 15.5" preserveAspectRatio="none" style="position:absolute;left:452.5px;top:180.5px"><rect width="16" height="15.500" fill="#fff"/><path d="M3.200 3.400H1.600V14.200H3.200M7.600 3.400H9.200V14.200H7.600" stroke="#111" stroke-width="1.300" fill="none"/><rect x="3.200" y="5.300" width="1.500" height="2.400" fill="#f02828"/><rect x="5.700" y="5.300" width="1.500" height="2.400" fill="#f02828"/><rect x="3.200" y="10" width="1.500" height="2.400" fill="#f02828"/><rect x="5.700" y="10" width="1.500" height="2.400" fill="#f02828"/><text x="10.300" y="5" font-family="Liberation Sans,sans-serif" font-weight="bold" font-size="5.800" fill="#111">-1</text></svg>
<div style="position:absolute;left:468.70px;top:179.80px;line-height:15px;font-family:'Liberation Sans','DejaVu Sans',sans-serif;font-size:11.5px;font-weight:bold;color:#fff;white-space:nowrap;letter-spacing:-0.395px;text-shadow:1px 1px 0 #0a2a90;">Решить систему уравнений</div>
<div style="position:absolute;left:965.5px;top:177.5px;width:17.5px;height:17px;box-sizing:border-box;border:1px solid #dfe8fb;border-radius:3px;background:radial-gradient(circle at 35% 30%,#6f9dfb 0%,#2f67e8 55%,#1c4fd0 100%);"><div style="position:absolute;left:4.2px;top:10.2px;width:5.6px;height:2.5px;background:#fff"></div></div>
<div style="position:absolute;left:985.5px;top:177.5px;width:17.5px;height:17px;box-sizing:border-box;border:1px solid #6a90f0;border-radius:3px;background:linear-gradient(135deg,#3e70f0,#2454dc);"><div style="position:absolute;left:3.9px;top:3.4px;width:8.8px;height:8.2px;border:1px solid #7d9ff4;border-top-width:2.5px;box-sizing:border-box"></div></div>
<div style="position:absolute;left:1004.5px;top:177.5px;width:17.5px;height:17px;box-sizing:border-box;border:1px solid #f6dcd2;border-radius:3px;background:radial-gradient(circle at 35% 30%,#f2a284 0%,#dc4f2c 55%,#bf3416 100%);"><svg width="17.5" height="17" viewBox="0 0 20 20" style="position:absolute;left:-1px;top:-1px"><path d="M6 6L14.200 14.200M14.200 6L6 14.200" stroke="#fff4ec" stroke-width="2.300" stroke-linecap="round"/></svg></div>
<div style="position:absolute;left:455.5px;top:220.5px;width:563.5px;height:375px;box-sizing:border-box;border:1px solid;border-color:#fff #8e8b7e #8e8b7e #fff;border-right-width:1.500px;border-bottom-width:1.500px;"></div>
<div style="position:absolute;left:457px;top:205px;width:137.5px;height:16px;box-sizing:border-box;border:1px solid;border-color:#fff transparent transparent #fff;"></div>
<div style="position:absolute;left:593.5px;top:203px;width:104px;height:18.5px;box-sizing:border-box;background:#ece9d8;border:1px solid;border-color:#fff #6e6b5e transparent #fff;border-bottom:0;border-right-width:1.500px;"></div>
<div style="position:absolute;left:461.90px;top:206.80px;line-height:13px;font-family:'Liberation Sans','DejaVu Sans',sans-serif;font-size:10px;font-weight:normal;color:#000;white-space:nowrap;letter-spacing:-0.431px;">Параметры решаемой задачи</div>
<div style="position:absolute;left:600.80px;top:204.90px;line-height:13px;font-family:'Liberation Sans','DejaVu Sans',sans-serif;font-size:10px;font-weight:normal;color:#000;white-space:nowrap;letter-spacing:-0.405px;">Результаты решения</div>
<div style="position:absolute;left:465.40px;top:232.80px;line-height:13px;font-family:'Liberation Sans','DejaVu Sans',sans-serif;font-size:10px;font-weight:normal;color:#000;white-space:nowrap;letter-spacing:-0.432px;">Решение системы уравнений</div>
<div style="position:absolute;left:465.8px;top:257.3px;width:396.7px;height:326.2px;background:#aca899;box-sizing:border-box;border-top:1.500px solid #7d7a6e;border-left:1.500px solid #7d7a6e;"></div>
<div style="position:absolute;left:467.3px;top:258.8px;width:395.2px;height:255.8px;background:#ece9d8;"></div>
<div style="position:absolute;left:665.5px;top:273.5px;width:197px;height:241.1px;background:#dcdcdc;"></div>
<div style="position:absolute;left:664.5px;top:257.3px;width:1.2px;height:257.3px;background:#7d7a6e;"></div>
<div style="position:absolute;left:466.8px;top:273px;width:197.7px;height:1px;background:#8e8b7e;"></div>
<div style="position:absolute;left:466.8px;top:274px;width:197.7px;height:1px;background:#fdfcf8;"></div>
<div style="position:absolute;left:665.7px;top:273px;width:196.8px;height:1px;background:#8e8b7e;"></div>
<div style="position:absolute;left:466.8px;top:289px;width:197.7px;height:1px;background:#8e8b7e;"></div>
<div style="position:absolute;left:466.8px;top:290px;width:197.7px;height:1px;background:#fdfcf8;"></div>
<div style="position:absolute;left:665.7px;top:289px;width:196.8px;height:1px;background:#c4c4c4;"></div>
<div style="position:absolute;left:466.8px;top:305px;width:197.7px;height:1px;background:#8e8b7e;"></div>
<div style="position:absolute;left:466.8px;top:306px;width:197.7px;height:1px;background:#fdfcf8;"></div>
<div style="position:absolute;left:665.7px;top:305px;width:196.8px;height:1px;background:#c4c4c4;"></div>
<div style="position:absolute;left:466.8px;top:321px;width:197.7px;height:1px;background:#8e8b7e;"></div>
<div style="position:absolute;left:466.8px;top:322px;width:197.7px;height:1px;background:#fdfcf8;"></div>
<div style="position:absolute;left:665.7px;top:321px;width:196.8px;height:1px;background:#c4c4c4;"></div>
<div style="position:absolute;left:466.8px;top:337px;width:197.7px;height:1px;background:#8e8b7e;"></div>
<div style="position:absolute;left:466.8px;top:338px;width:197.7px;height:1px;background:#fdfcf8;"></div>
<div style="position:absolute;left:665.7px;top:337px;width:196.8px;height:1px;background:#c4c4c4;"></div>
<div style="position:absolute;left:466.8px;top:353px;width:197.7px;height:1px;background:#8e8b7e;"></div>
<div style="position:absolute;left:466.8px;top:354px;width:197.7px;height:1px;background:#fdfcf8;"></div>
<div style="position:absolute;left:665.7px;top:353px;width:196.8px;height:1px;background:#c4c4c4;"></div>
<div style="position:absolute;left:466.8px;top:369px;width:197.7px;height:1px;background:#8e8b7e;"></div>
<div style="position:absolute;left:466.8px;top:370px;width:197.7px;height:1px;background:#fdfcf8;"></div>
<div style="position:absolute;left:665.7px;top:369px;width:196.8px;height:1px;background:#c4c4c4;"></div>
<div style="position:absolute;left:466.8px;top:385px;width:197.7px;height:1px;background:#8e8b7e;"></div>
<div style="position:absolute;left:466.8px;top:386px;width:197.7px;height:1px;background:#fdfcf8;"></div>
<div style="position:absolute;left:665.7px;top:385px;width:196.8px;height:1px;background:#c4c4c4;"></div>
<div style="position:absolute;left:466.8px;top:401px;width:197.7px;height:1px;background:#8e8b7e;"></div>
<div style="position:absolute;left:466.8px;top:402px;width:197.7px;height:1px;background:#fdfcf8;"></div>
<div style="position:absolute;left:665.7px;top:401px;width:196.8px;height:1px;background:#c4c4c4;"></div>
<div style="position:absolute;left:466.8px;top:417px;width:197.7px;height:1px;background:#8e8b7e;"></div>
<div style="position:absolute;left:466.8px;top:418px;width:197.7px;height:1px;background:#fdfcf8;"></div>
<div style="position:absolute;left:665.7px;top:417px;width:196.8px;height:1px;background:#c4c4c4;"></div>
<div style="position:absolute;left:466.8px;top:433px;width:197.7px;height:1px;background:#8e8b7e;"></div>
<div style="position:absolute;left:466.8px;top:434px;width:197.7px;height:1px;background:#fdfcf8;"></div>
<div style="position:absolute;left:665.7px;top:433px;width:196.8px;height:1px;background:#c4c4c4;"></div>
<div style="position:absolute;left:466.8px;top:449px;width:197.7px;height:1px;background:#8e8b7e;"></div>
<div style="position:absolute;left:466.8px;top:450px;width:197.7px;height:1px;background:#fdfcf8;"></div>
<div style="position:absolute;left:665.7px;top:449px;width:196.8px;height:1px;background:#c4c4c4;"></div>
<div style="position:absolute;left:466.8px;top:465px;width:197.7px;height:1px;background:#8e8b7e;"></div>
<div style="position:absolute;left:466.8px;top:466px;width:197.7px;height:1px;background:#fdfcf8;"></div>
<div style="position:absolute;left:665.7px;top:465px;width:196.8px;height:1px;background:#c4c4c4;"></div>
<div style="position:absolute;left:466.8px;top:481px;width:197.7px;height:1px;background:#8e8b7e;"></div>
<div style="position:absolute;left:466.8px;top:482px;width:197.7px;height:1px;background:#fdfcf8;"></div>
<div style="position:absolute;left:665.7px;top:481px;width:196.8px;height:1px;background:#c4c4c4;"></div>
<div style="position:absolute;left:466.8px;top:497px;width:197.7px;height:1px;background:#8e8b7e;"></div>
<div style="position:absolute;left:466.8px;top:498px;width:197.7px;height:1px;background:#fdfcf8;"></div>
<div style="position:absolute;left:665.7px;top:497px;width:196.8px;height:1px;background:#c4c4c4;"></div>
<div style="position:absolute;left:466.8px;top:513px;width:197.7px;height:1px;background:#8e8b7e;"></div>
<div style="position:absolute;left:665.7px;top:513px;width:196.8px;height:1px;background:#c4c4c4;"></div>
<div style="position:absolute;left:761.38px;top:260.00px;line-height:14px;font-family:'Liberation Serif','DejaVu Serif',serif;font-size:10.5px;font-weight:bold;color:#111;white-space:nowrap;">1</div>
<div style="position:absolute;left:563.08px;top:277.70px;line-height:14px;font-family:'Liberation Serif','DejaVu Serif',serif;font-size:10.5px;font-weight:normal;color:#111;white-space:nowrap;">1</div>
<div style="position:absolute;left:748.50px;top:277.30px;line-height:13px;font-family:'Liberation Sans','DejaVu Sans',sans-serif;font-size:10px;font-weight:normal;color:#111;white-space:nowrap;">2.5</div>
<div style="position:absolute;left:563.08px;top:293.70px;line-height:14px;font-family:'Liberation Serif','DejaVu Serif',serif;font-size:10.5px;font-weight:normal;color:#111;white-space:nowrap;">2</div>
<div style="position:absolute;left:748.50px;top:293.30px;line-height:13px;font-family:'Liberation Sans','DejaVu Sans',sans-serif;font-size:10px;font-weight:normal;color:#111;white-space:nowrap;">4.8</div>
<div style="position:absolute;left:563.08px;top:309.70px;line-height:14px;font-family:'Liberation Serif','DejaVu Serif',serif;font-size:10.5px;font-weight:normal;color:#111;white-space:nowrap;">3</div>
<div style="position:absolute;left:748.50px;top:309.30px;line-height:13px;font-family:'Liberation Sans','DejaVu Sans',sans-serif;font-size:10px;font-weight:normal;color:#111;white-space:nowrap;">-0.12</div>
<div style="position:absolute;left:563.08px;top:325.70px;line-height:14px;font-family:'Liberation Serif','DejaVu Serif',serif;font-size:10.5px;font-weight:normal;color:#111;white-space:nowrap;">4</div>
<div style="position:absolute;left:748.50px;top:325.30px;line-height:13px;font-family:'Liberation Sans','DejaVu Sans',sans-serif;font-size:10px;font-weight:normal;color:#111;white-space:nowrap;">0</div>
<div style="position:absolute;left:563.08px;top:341.70px;line-height:14px;font-family:'Liberation Serif','DejaVu Serif',serif;font-size:10.5px;font-weight:normal;color:#111;white-space:nowrap;">5</div>
<div style="position:absolute;left:748.50px;top:341.30px;line-height:13px;font-family:'Liberation Sans','DejaVu Sans',sans-serif;font-size:10px;font-weight:normal;color:#111;white-space:nowrap;">8.1</div>
<div style="position:absolute;left:563.08px;top:357.70px;line-height:14px;font-family:'Liberation Serif','DejaVu Serif',serif;font-size:10.5px;font-weight:normal;color:#111;white-space:nowrap;">6</div>
<div style="position:absolute;left:748.50px;top:357.30px;line-height:13px;font-family:'Liberation Sans','DejaVu Sans',sans-serif;font-size:10px;font-weight:normal;color:#111;white-space:nowrap;">6.32</div>
<div style="position:absolute;left:563.08px;top:373.70px;line-height:14px;font-family:'Liberation Serif','DejaVu Serif',serif;font-size:10.5px;font-weight:normal;color:#111;white-space:nowrap;">7</div>
<div style="position:absolute;left:748.50px;top:373.30px;line-height:13px;font-family:'Liberation Sans','DejaVu Sans',sans-serif;font-size:10px;font-weight:normal;color:#111;white-space:nowrap;">-14.8</div>
<div style="position:absolute;left:563.08px;top:389.70px;line-height:14px;font-family:'Liberation Serif','DejaVu Serif',serif;font-size:10.5px;font-weight:normal;color:#111;white-space:nowrap;">8</div>
<div style="position:absolute;left:748.50px;top:389.30px;line-height:13px;font-family:'Liberation Sans','DejaVu Sans',sans-serif;font-size:10px;font-weight:normal;color:#111;white-space:nowrap;">1.1</div>
<div style="position:absolute;left:563.08px;top:405.70px;line-height:14px;font-family:'Liberation Serif','DejaVu Serif',serif;font-size:10.5px;font-weight:normal;color:#111;white-space:nowrap;">9</div>
<div style="position:absolute;left:748.50px;top:405.30px;line-height:13px;font-family:'Liberation Sans','DejaVu Sans',sans-serif;font-size:10px;font-weight:normal;color:#111;white-space:nowrap;">-5.82</div>
<div style="position:absolute;left:560.45px;top:421.70px;line-height:14px;font-family:'Liberation Serif','DejaVu Serif',serif;font-size:10.5px;font-weight:normal;color:#111;white-space:nowrap;">10</div>
<div style="position:absolute;left:748.50px;top:421.30px;line-height:13px;font-family:'Liberation Sans','DejaVu Sans',sans-serif;font-size:10px;font-weight:normal;color:#111;white-space:nowrap;">4.8</div>
<div style="position:absolute;left:560.64px;top:437.70px;line-height:14px;font-family:'Liberation Serif','DejaVu Serif',serif;font-size:10.5px;font-weight:normal;color:#111;white-space:nowrap;">11</div>
<div style="position:absolute;left:748.50px;top:437.30px;line-height:13px;font-family:'Liberation Sans','DejaVu Sans',sans-serif;font-size:10px;font-weight:normal;color:#111;white-space:nowrap;">9.7</div>
<div style="position:absolute;left:560.45px;top:453.70px;line-height:14px;font-family:'Liberation Serif','DejaVu Serif',serif;font-size:10.5px;font-weight:normal;color:#111;white-space:nowrap;">12</div>
<div style="position:absolute;left:748.50px;top:453.30px;line-height:13px;font-family:'Liberation Sans','DejaVu Sans',sans-serif;font-size:10px;font-weight:normal;color:#111;white-space:nowrap;">2.1</div>
<div style="position:absolute;left:560.45px;top:469.70px;line-height:14px;font-family:'Liberation Serif','DejaVu Serif',serif;font-size:10.5px;font-weight:normal;color:#111;white-space:nowrap;">13</div>
<div style="position:absolute;left:748.50px;top:469.30px;line-height:13px;font-family:'Liberation Sans','DejaVu Sans',sans-serif;font-size:10px;font-weight:normal;color:#111;white-space:nowrap;">0.87</div>
<div style="position:absolute;left:560.45px;top:485.70px;line-height:14px;font-family:'Liberation Serif','DejaVu Serif',serif;font-size:10.5px;font-weight:normal;color:#111;white-space:nowrap;">14</div>
<div style="position:absolute;left:748.50px;top:485.30px;line-height:13px;font-family:'Liberation Sans','DejaVu Sans',sans-serif;font-size:10px;font-weight:normal;color:#111;white-space:nowrap;">1.1</div>
<div style="position:absolute;left:560.45px;top:501.70px;line-height:14px;font-family:'Liberation Serif','DejaVu Serif',serif;font-size:10.5px;font-weight:normal;color:#111;white-space:nowrap;">15</div>
<div style="position:absolute;left:748.50px;top:501.30px;line-height:13px;font-family:'Liberation Sans','DejaVu Sans',sans-serif;font-size:10px;font-weight:normal;color:#111;white-space:nowrap;">8</div>
<div style="position:absolute;left:467.3px;top:568.6px;width:395.2px;height:14.9px;background:#d3e0fb;box-sizing:border-box;border-top:1px solid #eef3fd;"></div>
<div style="position:absolute;left:468px;top:570px;width:13px;height:13px;background:#c4d5f9;border:1px solid #e9effc;box-sizing:border-box;border-radius:2px;"></div>
<div style="position:absolute;left:472.33px;top:570.00px;line-height:12px;font-family:'Liberation Sans','DejaVu Sans',sans-serif;font-size:13px;font-weight:normal;color:#3a5aa8;white-space:nowrap;"><b>&#8249;</b></div>
<div style="position:absolute;left:848.5px;top:570px;width:13px;height:13px;background:#c4d5f9;border:1px solid #e9effc;box-sizing:border-box;border-radius:2px;"></div>
<div style="position:absolute;left:853.33px;top:570.00px;line-height:12px;font-family:'Liberation Sans','DejaVu Sans',sans-serif;font-size:13px;font-weight:normal;color:#3a5aa8;white-space:nowrap;"><b>&#8250;</b></div>
<div style="position:absolute;left:482.5px;top:570.5px;width:359.5px;height:12px;background:linear-gradient(180deg,#cbdafb,#bcd0fa 60%,#b4c8f6);border-radius:2px;border:1px solid #e9effc;box-sizing:border-box;"></div>
<div style="position:absolute;left:658.66px;top:572.50px;line-height:8px;font-family:'Liberation Sans','DejaVu Sans',sans-serif;font-size:6px;font-weight:normal;color:#8fa8e0;white-space:nowrap;">|||</div>
<div style="position:absolute;left:818px;top:600.3px;width:63.5px;height:19.7px;background:#000;"></div>
<div style="position:absolute;left:819px;top:601.3px;width:61.5px;height:17.7px;box-sizing:border-box;background:#ece9d8;border:1px solid;border-color:#fff #6e6b5e #6e6b5e #fff;box-shadow:inset -1px -1px 0 #aca899;"></div>
<div style="position:absolute;left:886.5px;top:600.3px;width:63.5px;height:19.7px;box-sizing:border-box;background:#ece9d8;border:1px solid;border-color:#fff #6e6b5e #6e6b5e #fff;box-shadow:inset -1px -1px 0 #aca899;"></div>
<div style="position:absolute;left:955px;top:600.3px;width:63.5px;height:19.7px;box-sizing:border-box;background:#ece9d8;border:1px solid;border-color:#fff #6e6b5e #6e6b5e #fff;box-shadow:inset -1px -1px 0 #aca899;"></div>
<div style="position:absolute;left:827.20px;top:603.50px;line-height:13px;font-family:'Liberation Sans','DejaVu Sans',sans-serif;font-size:10px;font-weight:normal;color:#aca899;white-space:nowrap;letter-spacing:-0.653px;text-shadow:1px 1px 0 #fff;">Вычислить</div>
<div style="position:absolute;left:904.70px;top:603.50px;line-height:13px;font-family:'Liberation Sans','DejaVu Sans',sans-serif;font-size:10px;font-weight:normal;color:#000;white-space:nowrap;letter-spacing:-0.584px;">Выход</div>
<div style="position:absolute;left:968.70px;top:603.50px;line-height:13px;font-family:'Liberation Sans','DejaVu Sans',sans-serif;font-size:10px;font-weight:normal;color:#000;white-space:nowrap;letter-spacing:-0.462px;">Справка</div>
</body>
</html>
